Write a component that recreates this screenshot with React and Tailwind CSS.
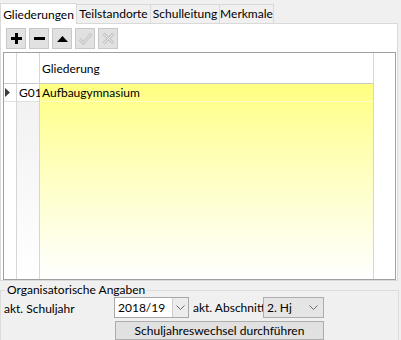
import React from 'react'

const font = "font-['Lato','Liberation_Sans',sans-serif]"

const ToolButton = ({ children }) => (
  <button className="w-[20px] h-[21px] flex items-center justify-center bg-[#e1e1e1] border border-[#c8c8c8]">
    {children}
  </button>
)

const Chevron = () => (
  <svg width="9" height="5" viewBox="0 0 9 5">
    <polyline points="0.5,0.5 4.5,4.5 8.5,0.5" fill="none" stroke="#6b6b6b" strokeWidth="1" />
  </svg>
)

const tabs = [
  { label: 'Teilstandorte', w: 'w-[74px]' },
  { label: 'Schulleitung', w: 'w-[69px]' },
  { label: 'Merkmale', w: 'w-[54px]' },
]

export default function App() {
  return (
    <div className={`w-[401px] h-[340px] overflow-hidden bg-[#f0f0f0] text-[12px] leading-[14px] text-black whitespace-nowrap ${font}`}>
      {/* tabs */}
      <div className="flex items-end h-[23px]">
        <div className="relative w-[77px] h-[21px] -mb-px bg-white border-l border-t border-r border-[#d9d9d9] flex items-center justify-center pt-[1px]">
          Gliederungen
        </div>
        {tabs.map((t) => (
          <div
            key={t.label}
            className={`${t.w} h-[19px] bg-[#f0f0f0] border-t border-r border-[#d9d9d9] flex items-center justify-center`}
          >
            {t.label}
          </div>
        ))}
      </div>

      {/* tab panel */}
      <div className="w-[398px] h-[258px] bg-white border border-[#d9d9d9] pt-[4px]">
        <div className="flex gap-[3px] pl-[5px]">
          <ToolButton>
            <svg width="11" height="11" viewBox="0 0 11 11">
              <rect x="4" y="0" width="3" height="11" fill="#000" />
              <rect x="0" y="4" width="11" height="3" fill="#000" />
            </svg>
          </ToolButton>
          <ToolButton>
            <svg width="11" height="3" viewBox="0 0 11 3">
              <rect x="0" y="0" width="11" height="3" fill="#000" />
            </svg>
          </ToolButton>
          <ToolButton>
            <svg width="11" height="6" viewBox="0 0 11 6">
              <polygon points="5.5,0 11,6 0,6" fill="#000" />
            </svg>
          </ToolButton>
          <ToolButton>
            <svg width="15" height="13" viewBox="0 0 15 13">
              <polyline points="1.5,7 5.5,11 13.5,1.5" fill="none" stroke="#c4c4c4" strokeWidth="3" />
              <polyline points="1.5,7 5.5,11 13.5,1.5" fill="none" stroke="#ececec" strokeWidth="1" />
            </svg>
          </ToolButton>
          <ToolButton>
            <svg width="13" height="13" viewBox="0 0 13 13">
              <path d="M1.5 1.5 L11.5 11.5 M11.5 1.5 L1.5 11.5" fill="none" stroke="#c4c4c4" strokeWidth="3" />
              <path d="M1.5 1.5 L11.5 11.5 M11.5 1.5 L1.5 11.5" fill="none" stroke="#ececec" strokeWidth="1" />
            </svg>
          </ToolButton>
        </div>

        {/* grid */}
        <div className="ml-[2px] mt-[3px] w-[393px] h-[228px] border border-[#a0a0a0] flex">
          <div className="w-[13px] border-r border-[#d6d6d6] flex flex-col">
            <div className="h-[31px] border-b border-[#c8c8c8]" />
            <div className="h-[18px] border-b border-[#e0e0e0] flex items-center pl-[1px]">
              <svg width="5" height="9" viewBox="0 0 5 9">
                <polygon points="0,0 5,4.5 0,9" fill="#3c3c3c" />
              </svg>
            </div>
          </div>
          <div className="w-[23px] border-r border-[#d6d6d6] flex flex-col">
            <div className="h-[31px] border-b border-[#c8c8c8]" />
            <div className="h-[18px] border-b border-[#e0e0e0] flex items-center pl-[2px]">G01</div>
            <div className="flex-1 bg-gradient-to-b from-[#f2f2f2] to-white" />
          </div>
          <div className="w-[334px] border-r border-[#d6d6d6] flex flex-col">
            <div className="h-[31px] border-b border-[#c8c8c8] flex items-center pl-[2px] pt-[2px]">Gliederung</div>
            <div className="flex-1 flex flex-col bg-gradient-to-b from-[#ffff80] to-white">
              <div className="h-[18px] border-b border-[#ffffc8] flex items-center pl-[2px]">Aufbaugymnasium</div>
            </div>
          </div>
          <div className="flex-1" />
        </div>
      </div>

      {/* group box */}
      <fieldset className="mt-[2px] w-[399px] h-[62px] border border-[#dcdcdc] px-0">
        <legend className="ml-[4px] px-[2px] leading-[14px]">Organisatorische Angaben</legend>
        <div className="flex items-center h-[21px]">
          <span className="ml-[3px] w-[110px] pt-[2px]">akt. Schuljahr</span>
          <div className="w-[75px] h-[21px] bg-white border border-[#a8a8a8] flex">
            <span className="flex-1 flex items-center pl-[3px]">2018/19</span>
            <span className="w-[16px] bg-[#ececec] border-l border-[#cfcfcf] flex items-center justify-center">
              <Chevron />
            </span>
          </div>
          <span className="ml-[4px] w-[70px]">akt. Abschnitt</span>
          <div className="w-[61px] h-[21px] bg-[#e5e5e5] border border-[#adadad] flex items-center justify-between pl-[3px] pr-[5px]">
            <span>2. Hj</span>
            <Chevron />
          </div>
        </div>
        <div className="mt-[3px] ml-[114px]">
          <button className="w-[209px] h-[19px] bg-[#e1e1e1] border border-[#adadad] flex items-center justify-center">
            Schuljahreswechsel durchführen
          </button>
        </div>
      </fieldset>
    </div>
  )
}
